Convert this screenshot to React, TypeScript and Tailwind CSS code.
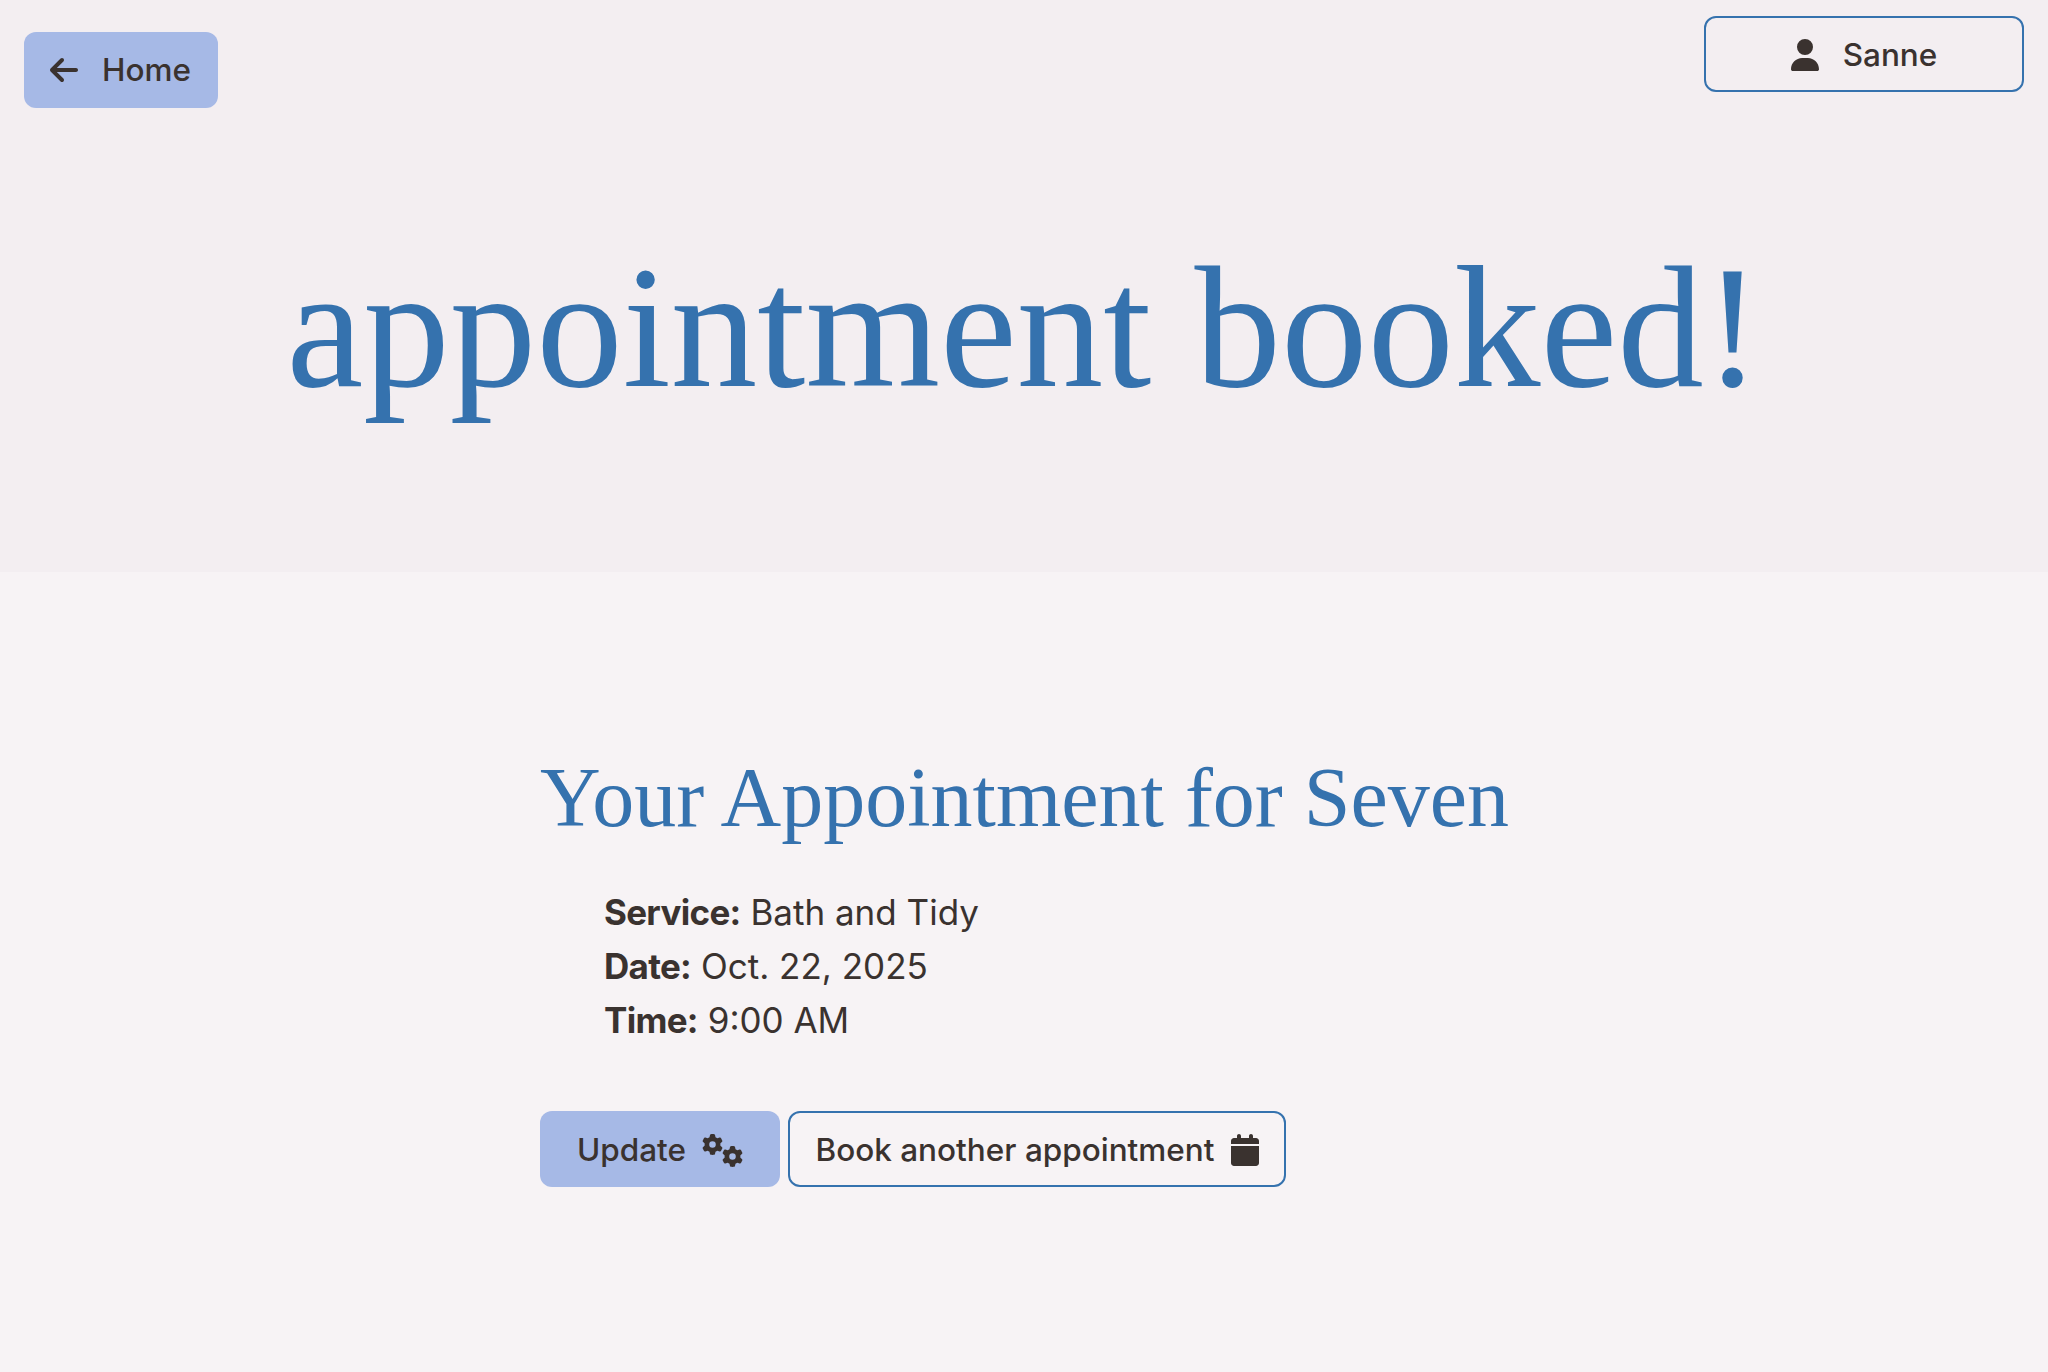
import React from 'react';
import { FaArrowLeft, FaCalendar, FaGear, FaUser } from 'react-icons/fa6';

const displayFont = "font-['Liberation_Serif',serif]";

export default function App() {
  return (
    <div className="min-h-[1372px] bg-[#f7f3f5] font-['Inter',sans-serif] text-[#3a322f]">
      {/* Hero */}
      <header className="h-[572px] bg-[#f3eef1] pl-6 pr-6 pt-4">
        <div className="flex items-start justify-between">
          <a className="mt-4 flex h-[76px] w-[194px] items-center rounded-xl bg-[#a6b9e6] pl-[26px] text-[31.5px] font-medium">
            <FaArrowLeft className="mr-[24px] h-8 w-7" />
            Home
          </a>
          <button className="flex h-[76px] w-[320px] items-center justify-center rounded-xl border-2 border-[#3572ae] pt-0.5 text-[31.5px] font-medium">
            <FaUser className="mr-[24px] h-8 w-7" />
            Sanne
          </button>
        </div>
        <h1 className={`${displayFont} mt-[120px] text-center text-[173px] leading-[200px] text-[#3572ae]`}>
          appointment booked!
        </h1>
      </header>

      {/* Details */}
      <main className="pl-[540px] pt-[176px]">
        <h2 className={`${displayFont} text-[84px] leading-[100px] text-[#3572ae]`}>Your Appointment for Seven</h2>
        <ul className="mt-[37px] pl-[64px] text-[35px] leading-[54px]">
          <li><strong className="font-bold tracking-[-0.02em]">Service:</strong> Bath and Tidy</li>
          <li><strong className="font-bold tracking-[-0.02em]">Date:</strong> Oct. 22, 2025</li>
          <li><strong className="font-bold tracking-[-0.02em]">Time:</strong> 9:00 AM</li>
        </ul>
        <div className="mt-[64px] flex gap-2">
          <button className="flex h-[76px] w-[240px] items-center justify-center rounded-xl bg-[#a6b9e6] pt-0.5 text-[31.5px] font-medium">
            Update
            <span className="ml-4 flex items-start">
              <FaGear className="h-[21px] w-[21px]" />
              <FaGear className="mt-3 -ml-px h-[21px] w-[21px]" />
            </span>
          </button>
          <button className="flex h-[76px] w-[498px] items-center justify-center rounded-xl border-2 border-[#3572ae] pt-0.5 text-[31.5px] font-medium">
            Book another appointment
            <FaCalendar className="ml-4 h-8 w-7" />
          </button>
        </div>
      </main>
    </div>
  );
}
